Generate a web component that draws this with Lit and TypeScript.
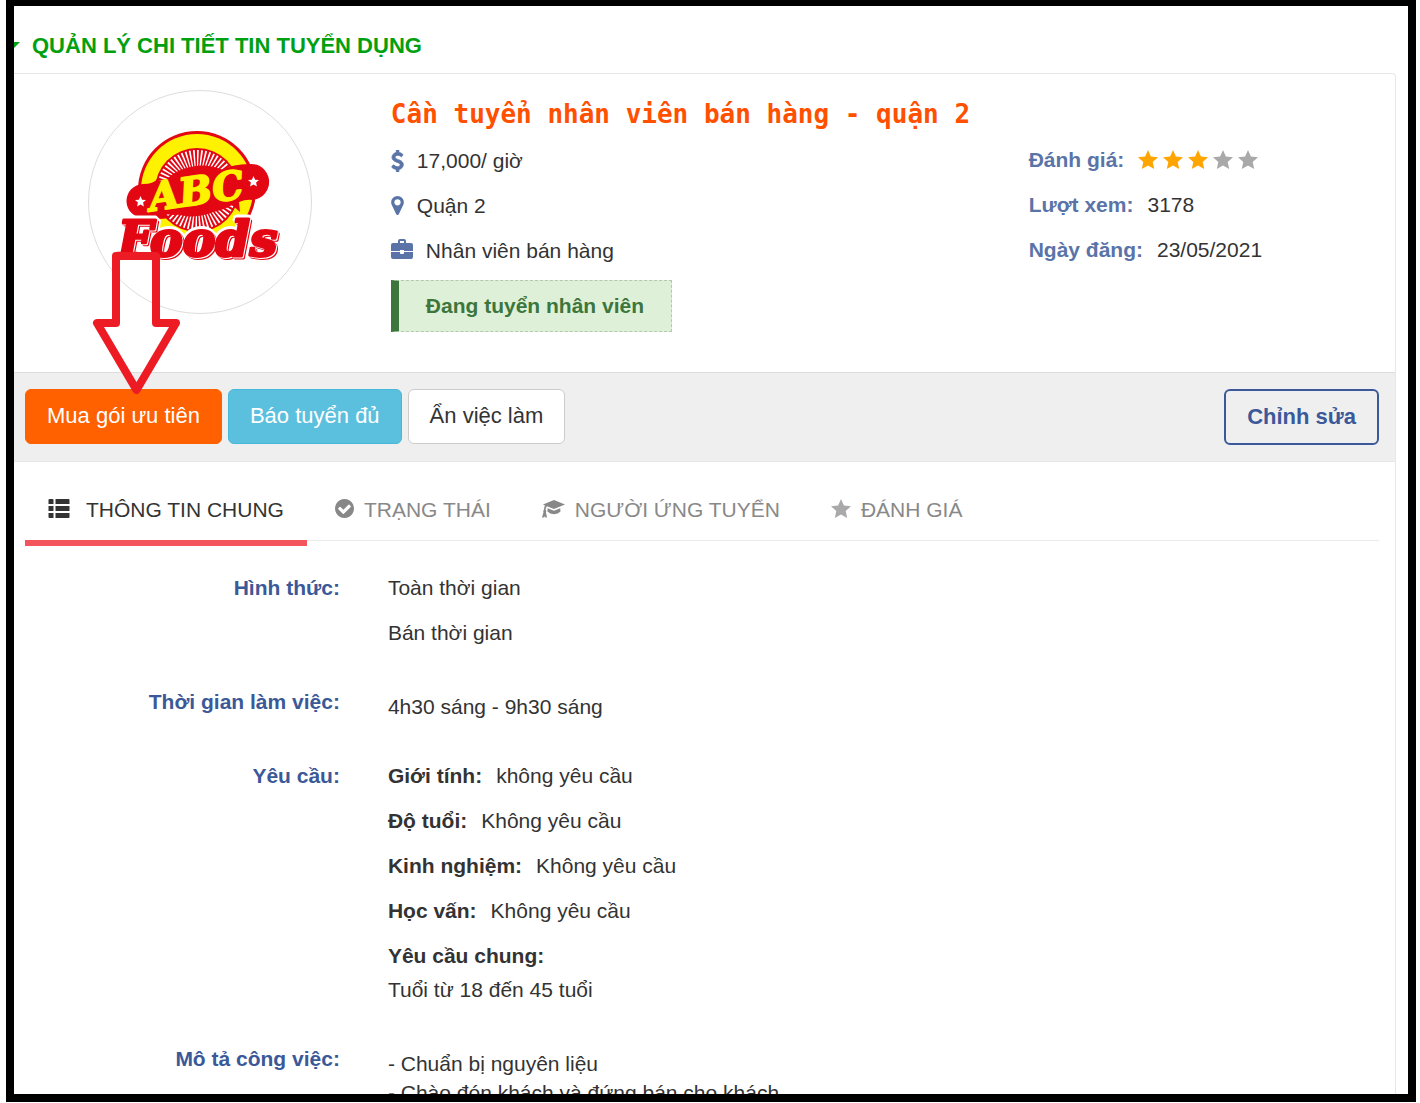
import { LitElement, html, svg, css } from "lit";
import { customElement, property, state } from "lit/decorators.js";
import { classMap } from "lit/directives/class-map.js";

const STAR = svg`<polygon points="10,0 12.9,6.6 20,7.3 14.7,12 16.2,19 10,15.4 3.8,19 5.3,12 0,7.3 7.1,6.6" />`;

const ICONS = {
  star: { box: "0 0 20 19", shape: STAR },
  dollar: {
    box: "376 0 1040 1792",
    shape: svg`<path stroke="currentColor" stroke-width="80" d="M1362 1185q0 153-99.5 263.5t-258.5 136.5v175q0 14-9 23t-23 9h-135q-13 0-22.5-9.5t-9.5-22.5v-175q-66-9-127.5-31t-101.5-44.5-74-48-46.5-37.5-17.5-18q-17-21-2-41l103-135q7-10 23-12 15-2 24 9l2 2q113 99 243 125 37 8 74 8 81 0 142.5-43t61.5-122q0-28-15-53t-33.5-42-58.5-37.5-66-32-80-32.5q-39-16-61.5-25t-61.5-26.5-62.5-31-56.5-35.5-53.5-42.5-43.5-49-35.5-58-21-66.5-8.5-78q0-138 98-242t255-134v-180q0-13 9.5-22.5t22.5-9.5h135q14 0 23 9t9 23v176q57 6 110.5 23t87 33.5 63.5 37.5 39 29 15 14q17 18 5 38l-81 146q-8 15-23 16-14 3-27-7-3-3-14.5-12t-39-26.5-58.5-32-74.5-26-85.5-11.5q-95 0-155 43t-60 111q0 26 8.5 48t29.5 41.5 39.5 33 56 31 60.5 27 70 27.5q53 20 81 31.5t76 35 75.5 42.5 62 50 53 63.5 31.5 76.5 13 94z" />`,
  },
  marker: {
    box: "384 128 1024 1536",
    shape: svg`<path d="M1152 640q0-106-75-181t-181-75-181 75-75 181 75 181 181 75 181-75 75-181zm256 0q0 109-33 179l-364 774q-16 33-47.5 52t-67.5 19-67.5-19-46.5-52l-365-774q-33-70-33-179 0-212 150-362t362-150 362 150 150 362z" />`,
  },
  briefcase: {
    box: "0 0 22 20",
    shape: svg`<path fill-rule="evenodd" d="M7 4V2Q7 0 9 0H13Q15 0 15 2V4H20Q22 4 22 6V12H13V11H9V12H0V6Q0 4 2 4ZM9 4H13V2H9ZM0 13H9V14Q9 15 10 15H12Q13 15 13 14V13H22V18Q22 20 20 20H2Q0 20 0 18Z" />`,
  },
  list: {
    box: "0 0 21 19",
    shape: svg`<path d="M0 1Q0 0 1 0H4Q5 0 5 1V5H0ZM7 0H20Q21 0 21 1V5H7ZM0 7H5V12H0ZM7 7H21V12H7ZM0 14H5V19H1Q0 19 0 18ZM7 14H21V18Q21 19 20 19H7Z" />`,
  },
  check: {
    box: "128 128 1536 1536",
    shape: svg`<path d="M1412 734q0-28-18-46l-91-90q-19-19-45-19t-45 19l-408 407-226-226q-19-19-45-19t-45 19l-91 90q-18 18-18 46 0 27 18 45l362 362q19 19 45 19 27 0 46-19l543-543q18-18 18-45zm252 162q0 209-103 385.5t-279.5 279.5-385.5 103-385.5-103-279.5-279.5-103-385.5 103-385.5 279.5-279.5 385.5-103 385.5 103 279.5 279.5 103 385.5z" />`,
  },
  cap: {
    box: "0 0 23 18",
    shape: svg`<path d="M12 0L23 4.4L12 9L5 6.3Q3.6 7.2 3.6 10Q4.7 10.8 3.9 12.2L5 17.6H3.4L2.8 16L2.2 17.6H0L1.5 12.2Q.8 10.8 1.9 10Q2 7.3 3 5.6L1 4.4ZM5.6 8.3L12 10.8L18.2 8.3L18.5 11.6Q16 14.2 12 14.2Q8 14.2 5.4 11.6Z" />`,
  },
};

type IconName = keyof typeof ICONS;

@customElement("job-icon")
class JobIcon extends LitElement {
  @property() name: IconName = "star";

  static styles = css`
    :host { display: block; flex: none; }
    .glyph { display: block; width: 100%; height: 100%; fill: currentColor; }
  `;

  render() {
    const icon = ICONS[this.name];
    return html`<svg class="glyph" viewBox=${icon.box} aria-hidden="true">${icon.shape}</svg>`;
  }
}

@customElement("company-logo")
class CompanyLogo extends LitElement {
  static styles = css`
    :host { display: block; width: 224px; height: 224px; border: 1px solid #ddd; border-radius: 50%; }
    .art { display: block; width: 100%; height: 100%; }
    .abc { font: italic bold 39px "DejaVu Serif", serif; fill: #fff200; stroke: #fff200; stroke-width: 2; stroke-linejoin: round; }
    .foods {
      font: italic bold 49px "DejaVu Serif", serif;
      fill: #e30613;
      stroke: #e30613;
      stroke-width: 3;
      stroke-linejoin: round;
      filter: drop-shadow(1px 1px 0 #fff) drop-shadow(1px 1px 0 #e30613)
        drop-shadow(-2px -2px 0 #fff) drop-shadow(2px -1px 0 #fff);
    }
  `;

  render() {
    return html`
      <svg class="art" viewBox="1 1 222 222" role="img" aria-label="ABC Foods">
        <circle cx="109" cy="100" r="59" fill="#e30613" />
        <circle cx="109" cy="100" r="56" fill="#fff200" />
        <circle cx="109" cy="100" r="42" fill="#e30613" />
        <circle cx="109" cy="100" r="30" fill="none" stroke="#fff" stroke-width="20"
          pathLength="120" stroke-dasharray="0.9 1.1" />
        <ellipse cx="109" cy="101" rx="38" ry="25" fill="#e30613" transform="rotate(-10 109 101)" />
        <path d="M55 94Q66 94 69 89L77 93L74 98Q105 78 132 80Q146 74 161 74A18 18 0 0 1 165 110Q158 109 151 112L152 122L144 115Q126 126 106 120Q92 127 78 124L82 128Q68 130 56 128A17 17 0 0 1 55 94Z" fill="#e30613" />
        <g fill="#fff">
          <g transform="translate(47 106) scale(.55)">${STAR}</g>
          <g transform="translate(160 86) scale(.55)">${STAR}</g>
        </g>
        <text class="abc" x="63" y="121" transform="rotate(-8 63 121)">ABC</text>
        <text class="foods" x="30" y="166">Foods</text>
      </svg>
    `;
  }
}

interface Tab { icon: IconName; label: string; }

const TABS: Tab[] = [
  { icon: "list", label: "THÔNG TIN CHUNG" },
  { icon: "check", label: "TRẠNG THÁI" },
  { icon: "cap", label: "NGƯỜI ỨNG TUYỂN" },
  { icon: "star", label: "ĐÁNH GIÁ" },
];

const REQUIREMENTS = [
  ["Giới tính:", "không yêu cầu"],
  ["Độ tuổi:", "Không yêu cầu"],
  ["Kinh nghiệm:", "Không yêu cầu"],
  ["Học vấn:", "Không yêu cầu"],
];

@customElement("app-root")
class AppRoot extends LitElement {
  @state() private active = 0;

  static styles = css`
    :host {
      display: block;
      background: #fff;
      color: #333;
      font: 21px/45px "Liberation Sans", Arial, sans-serif;
    }
    * { box-sizing: border-box; }
    h1, h2, p, dl, dd, dt { margin: 0; font-weight: normal; }
    .frame {
      height: calc(100vh - 1px);
      margin: 0 4px 0 6px;
      border: 8px solid #000;
      border-top-width: 6px;
      overflow: hidden;
    }
    .heading { display: flex; align-items: center; gap: 12px; height: 67px; padding-top: 11px; }
    .heading-text { color: #00a010; font-size: 22px; font-weight: bold; }
    .caret { flex: none; width: 6px; height: 6px; fill: #00a010; }

    .card {
      position: relative;
      margin-right: 12px;
      border: solid #e7e7e7;
      border-width: 1px 1px 0 0;
      border-top-right-radius: 4px;
    }
    .summary { display: grid; grid-template-columns: 27% 46.4% 1fr; padding: 16px 0 40px; }
    .photo { display: flex; justify-content: center; align-items: flex-start; }
    .intro { padding-left: 4px; }
    .title { color: #ff5000; font: bold 26px/48px "DejaVu Sans Mono", monospace; }
    .fact { display: flex; align-items: center; gap: 13px; }
    .fact-icon { color: #5a74a8; }
    .dollar { width: 13px; height: 22px; }
    .marker { width: 13px; height: 19px; }
    .briefcase { width: 22px; height: 20px; margin-bottom: 4px; }
    .badge {
      display: inline-block;
      margin-top: 7px;
      padding: 0 27px;
      border: 1px dashed #b2c9ab;
      border-left: 8px solid #3c763d;
      background: #dff0d8;
      color: #3c763d;
      font-weight: bold;
      line-height: 50px;
    }
    .meta { padding: 47px 0 0 1px; }
    .meta-row { display: flex; align-items: center; gap: 14px; }
    .meta-label { color: #5a74a8; font-weight: bold; }
    .stars { display: flex; gap: 5px; }
    .star { width: 20px; height: 19px; color: #a9a9a9; }
    .star.on { color: orange; }

    .pointer { position: absolute; left: 78px; top: 176px; width: 90px; height: 146px; pointer-events: none; }

    .actions {
      display: flex;
      gap: 6px;
      padding: 16px 16px 16px 11px;
      border: solid #ddd;
      border-width: 1px 0;
      border-bottom-color: #e7e7e7;
      background: #efefef;
    }
    .btn {
      height: 55px;
      padding: 0 21px 2px;
      border: 1px solid #ccc;
      border-radius: 6px;
      background: #fff;
      color: #333;
      font: 22px/50px "Liberation Sans", Arial, sans-serif;
      cursor: pointer;
    }
    .btn.priority { border-color: #ff6000; background: #ff6000; color: #fff; }
    .btn.full { border-color: #46b8da; background: #5bc0de; color: #fff; }
    .btn.edit {
      height: 56px;
      margin-left: auto;
      padding-bottom: 0;
      border: 2px solid #3b5998;
      background: transparent;
      color: #3b5998;
      font-weight: bold;
    }

    .tabs { display: flex; gap: 5px; height: 79px; margin: 0 16px 0 11px; border-bottom: 1px solid #eaeaea; }
    .tab {
      display: flex;
      align-items: center;
      gap: 10px;
      height: 84px;
      padding: 17px 23px 0;
      border: 0;
      border-bottom: 6px solid transparent;
      background: none;
      color: #888;
      font: 21px/45px "Liberation Sans", Arial, sans-serif;
      cursor: pointer;
    }
    .tab.active { border-bottom-color: #f4555d; color: #333; }
    .tab-icon { margin-bottom: 2px; }
    .icon-list { width: 22px; height: 19px; margin-right: 6px; }
    .icon-check { width: 19px; height: 19px; }
    .icon-cap { width: 23px; height: 18px; }
    .icon-star { width: 20px; height: 19px; color: #a9a9a9; }

    .details { display: grid; row-gap: 24px; padding-top: 24px; }
    .detail { display: grid; grid-template-columns: 23.6% 1fr; column-gap: 48px; }
    .detail-label { color: #3b5998; font-weight: bold; text-align: right; }
    .pair { display: flex; gap: 14px; }
    .strong { font-weight: bold; }
    .copy { padding: 8px 0; line-height: 29px; }
    .copy.lower { margin-top: 5px; }
    .copy.titled { display: grid; gap: 5px; }
  `;

  render() {
    return html`
      <main class="frame">
        <header class="heading">
          <svg class="caret" viewBox="0 0 6 6" aria-hidden="true"><polygon points="0,0 6,0 0,6" /></svg>
          <h1 class="heading-text">QUẢN LÝ CHI TIẾT TIN TUYỂN DỤNG</h1>
        </header>

        <section class="card">
          <div class="summary">
            <div class="photo"><company-logo></company-logo></div>
            <div class="intro">
              <h2 class="title">Cần tuyển nhân viên bán hàng - quận 2</h2>
              <p class="fact"><job-icon class="fact-icon dollar" name="dollar"></job-icon>17,000/ giờ</p>
              <p class="fact"><job-icon class="fact-icon marker" name="marker"></job-icon>Quận 2</p>
              <p class="fact"><job-icon class="fact-icon briefcase" name="briefcase"></job-icon>Nhân viên bán hàng</p>
              <div class="badge">Đang tuyển nhân viên</div>
            </div>
            <div class="meta">
              <div class="meta-row">
                <span class="meta-label">Đánh giá:</span>
                <span class="stars">
                  ${[1, 2, 3, 4, 5].map((n) => html`<job-icon class=${classMap({ star: true, on: n <= 3 })} name="star"></job-icon>`)}
                </span>
              </div>
              <div class="meta-row"><span class="meta-label">Lượt xem:</span><span>3178</span></div>
              <div class="meta-row"><span class="meta-label">Ngày đăng:</span><span>23/05/2021</span></div>
            </div>
          </div>

          <div class="actions">
            <button class="btn priority">Mua gói ưu tiên</button>
            <button class="btn full">Báo tuyển đủ</button>
            <button class="btn">Ẩn việc làm</button>
            <button class="btn edit">Chỉnh sửa</button>
          </div>

          <nav class="tabs">
            ${TABS.map((tab, i) => html`
              <button class=${classMap({ tab: true, active: i === this.active })} @click=${() => (this.active = i)}>
                <job-icon class="tab-icon icon-${tab.icon}" name=${tab.icon}></job-icon>${tab.label}
              </button>
            `)}
          </nav>

          <dl class="details">
            <div class="detail">
              <dt class="detail-label">Hình thức:</dt>
              <dd><p>Toàn thời gian</p><p>Bán thời gian</p></dd>
            </div>
            <div class="detail">
              <dt class="detail-label">Thời gian làm việc:</dt>
              <dd><p class="copy lower">4h30 sáng - 9h30 sáng</p></dd>
            </div>
            <div class="detail">
              <dt class="detail-label">Yêu cầu:</dt>
              <dd>
                ${REQUIREMENTS.map(([k, v]) => html`<p class="pair"><span class="strong">${k}</span><span>${v}</span></p>`)}
                <div class="copy titled"><p class="strong">Yêu cầu chung:</p><p>Tuổi từ 18 đến 45 tuổi</p></div>
              </dd>
            </div>
            <div class="detail">
              <dt class="detail-label">Mô tả công việc:</dt>
              <dd><p class="copy lower">- Chuẩn bị nguyên liệu<br />- Chào đón khách và đứng bán cho khách</p></dd>
            </div>
          </dl>

          <svg class="pointer" viewBox="0 0 90 146" aria-hidden="true">
            <path d="M24 6H64V73H84L44.500 140L5 73H24Z" fill="none" stroke="#ed1c24" stroke-width="8" stroke-linejoin="round" />
          </svg>
        </section>
      </main>
    `;
  }
}
